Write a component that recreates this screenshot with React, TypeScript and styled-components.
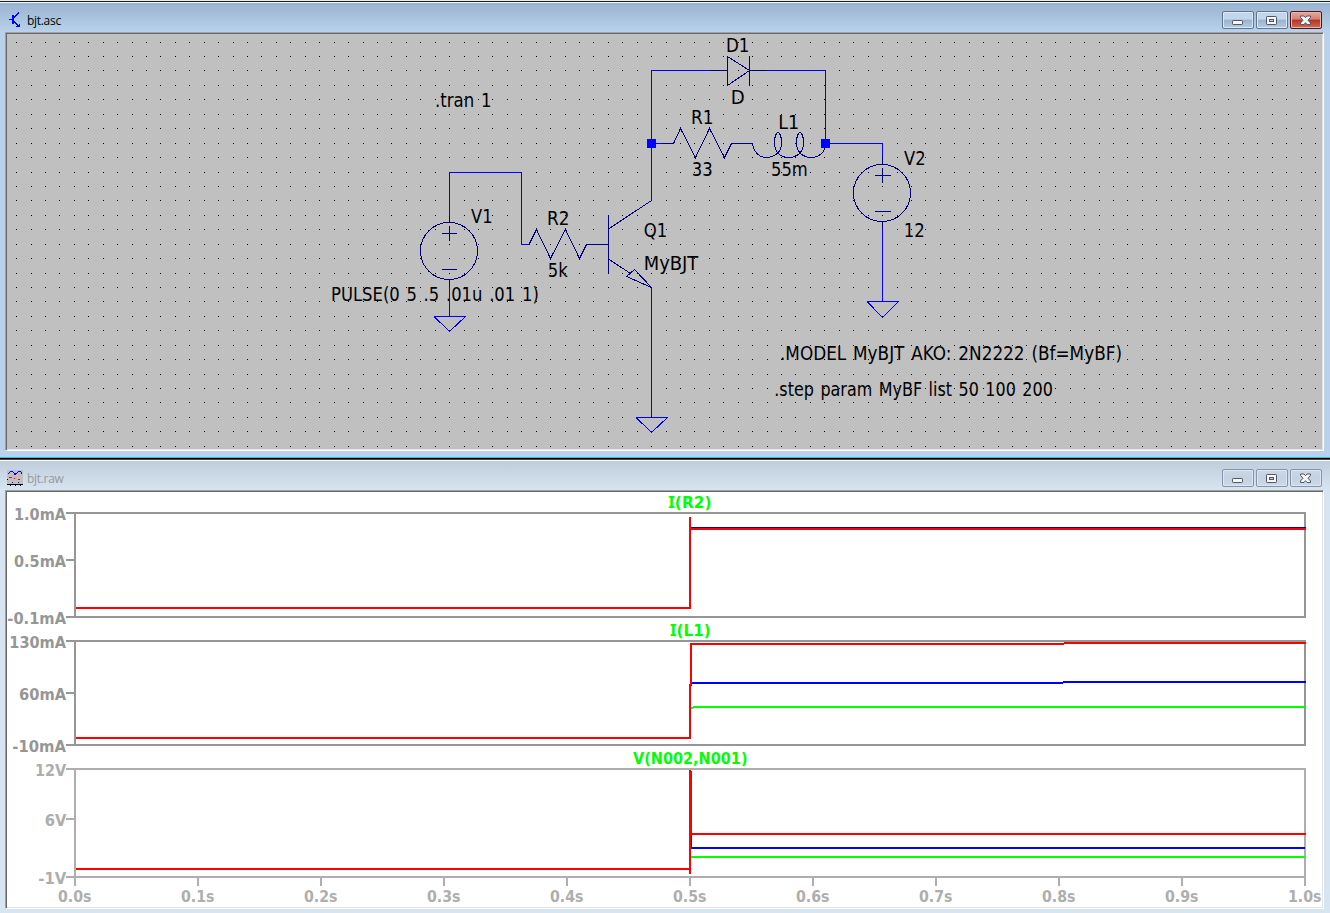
import React from "react";
import styled, { createGlobalStyle } from "styled-components";

const GlobalStyle = createGlobalStyle`
  body { margin: 0; background: #d7e4f2; overflow: hidden; }
`;

const Desktop = styled.main`
  width: 1330px;
  height: 913px;
  display: flex;
  flex-direction: column;
  overflow: hidden;
`;

const Win = styled.section<{ $active?: boolean }>`
  flex: none;
  box-sizing: border-box;
  height: ${(p) => (p.$active ? 459 : 454)}px;
  display: flex;
  flex-direction: column;
  background: ${(p) => (p.$active ? "#b9d1ea" : "#d7e4f2")};
  border-bottom: ${(p) => (p.$active ? "1px solid #000" : "none")};
  box-shadow: ${(p) => (p.$active ? "inset 0 -1px 0 #2fc4dc" : "none")};
`;

const TopEdge = styled.div<{ $active?: boolean }>`
  flex: none;
  height: ${(p) => (p.$active ? 3 : 2)}px;
  background: ${(p) =>
    p.$active
      ? "linear-gradient(#e9eee6 0 1px, #1c1f24 1px 2px, #f2f7fb 2px 3px)"
      : "linear-gradient(#47443f 0 1px, #fbfcfd 1px 2px)"};
`;

const TitleBar = styled.header<{ $active?: boolean }>`
  flex: none;
  height: 29px;
  box-sizing: border-box;
  padding: 8px 8px 0 7px;
  display: flex;
  align-items: flex-start;
  background: ${(p) =>
    p.$active ? "linear-gradient(#99b4d1, #b9d1ea)" : "linear-gradient(#bfcddb, #d7e4f2)"};
`;

const Title = styled.h1<{ $active?: boolean }>`
  flex: 1;
  margin: 1px 0 0 4px;
  font: 400 12px/18px "Open Sans", "Noto Sans", sans-serif;
  letter-spacing: -0.3px;
  color: ${(p) => (p.$active ? "#000" : "#999")};
`;

const Controls = styled.div`
  display: flex;
  gap: 2px;
`;

const looks = {
  active: ["#62748f", "linear-gradient(#c3d6ea 0 45%, #98b2cf 50%, #b4cce5)", "#dae7f4"],
  idle: ["#8593ac", "linear-gradient(#cbd8e6, #c3d1e0 50%, #ccd9e8)", "#dbe6f1"],
  close: ["#4d1420", "linear-gradient(#e4a79c 0, #d38275 45%, #b5331f 50%, #cf6d55)", "#eab6a9"],
};

const ControlButton = styled.button<{ $look: keyof typeof looks }>`
  width: 32px;
  height: 18px;
  padding: 0;
  box-sizing: border-box;
  display: flex;
  align-items: center;
  justify-content: center;
  border: 1px solid ${(p) => looks[p.$look][0]};
  border-radius: 2px;
  background: ${(p) => looks[p.$look][1]};
  box-shadow: inset 0 0 0 1px ${(p) => looks[p.$look][2]};
`;

const Client = styled.div<{ $fill: string }>`
  flex: none;
  width: 1315px;
  height: 415px;
  margin-left: 5px;
  border: 1px solid;
  border-color: #a0a0a0 #fff #fff #a0a0a0;
  padding: 1px;
  background:
    linear-gradient(#696969, #696969) 0 0 / 100% 1px no-repeat,
    linear-gradient(#696969, #696969) 0 0 / 1px 100% no-repeat,
    linear-gradient(#e3e3e3, #e3e3e3) 0 100% / 100% 1px no-repeat,
    linear-gradient(#e3e3e3, #e3e3e3) 100% 0 / 1px 100% no-repeat,
    ${(p) => p.$fill};
`;

const Canvas = styled.svg`
  display: block;
  width: 1315px;
  height: 415px;
`;

const Wire = styled.path`
  fill: none;
  stroke: #0000ff;
  stroke-width: 1;
  shape-rendering: crispEdges;
`;

const Part = styled(Wire)`
  stroke: #000080;
`;

const Label = styled.text`
  font: 400 18.6px "DejaVu Sans Condensed", "DejaVu Sans", sans-serif;
  word-spacing: 1.5px;
  fill: #000;
`;

const AxisText = styled.text<{ $tone: string }>`
  font: 700 16.3px "DejaVu Sans Condensed", "DejaVu Sans", sans-serif;
  fill: ${(p) => p.$tone};
`;

const SerifI = styled.tspan`
  font-family: "Noto Sans", sans-serif;
`;

const Axis = styled.path`
  fill: none;
  stroke-width: 2;
  shape-rendering: crispEdges;
`;

const Trace = styled(Axis)``;

function Buttons({ active }: { active?: boolean }) {
  const look = active ? "active" : "idle";
  return (
    <Controls>
      <ControlButton $look={look} aria-label="Minimize">
        <svg width="12" height="12" viewBox="0 0 12 12">
          <rect x=".5" y="6.5" width="10" height="4" rx=".7" fill="#f6f6f6" stroke="#535666" />
        </svg>
      </ControlButton>
      <ControlButton $look={look} aria-label="Restore">
        <svg width="12" height="12" viewBox="0 0 12 12">
          <rect x=".5" y="2.5" width="10" height="8" rx=".7" fill="#f6f6f6" stroke="#535666" />
          <rect x="3.5" y="5.5" width="4" height="2" fill="#b9cadd" stroke="#535666" />
        </svg>
      </ControlButton>
      <ControlButton $look={active ? "close" : "idle"} aria-label="Close">
        <svg width="12" height="12" viewBox="0 0 12 12">
          <path
            d="M.5 2H4L5.5 3.7 7 2H10.5V3.4L8 6.2 10.5 9V10.5H7L5.5 8.7 4 10.5H.5V9L3 6.2.5 3.4Z"
            fill="#f6f6f6"
            stroke="#535666"
          />
        </svg>
      </ControlButton>
    </Controls>
  );
}

const TransistorIcon = () => (
  <svg width="16" height="18" viewBox="7 11 16 18" shapeRendering="crispEdges">
    <path d="M9 19.5H12M14 17.5L19 12.5M14 21.5L18 25.5" stroke="#00f" fill="none" />
    <path d="M12 15H14V24H12ZM19 24H20V27H16V26H17V25H19Z" fill="#00f" />
  </svg>
);

const WaveIcon = () => (
  <svg width="16" height="18" viewBox="7 469 16 18" shapeRendering="crispEdges">
    <rect x="7" y="470" width="16" height="14" fill="#c0c0c0" />
    <path d="M7.5 474.5L10.5 471.5H12.5L15 474.5L18.5 471.5H20.5L22.5 474.5" fill="none" stroke="#00f" />
    <path d="M9 477H12V478H9ZM14 478H15V479H14ZM18 479H20V480H18Z" fill="#f00" />
    <path d="M12 482H13V483H12ZM18 482H19V483H18Z" fill="#00f" />
    <path d="M7 479H8V480H7ZM7 484H23V485H7ZM10 485H11V486H10ZM15 485H16V486H15ZM20 485H21V486H20Z" fill="#000" />
  </svg>
);

const dotRows = Array.from({ length: 29 }, (_, k) => Math.floor(42.135 + 14.43 * k));
const dotCols = Array.from({ length: 91 }, (_, k) => Math.floor(16.65 + 14.432 * k));
const dots = dotRows.map((y) => dotCols.map((x) => `M${x} ${y}h1v1h-1z`).join("")).join("");

// text, left edge, baseline, advance width
const labels: [string, number, number, number][] = [
  [".tran 1", 435, 107, 56.5],
  ["D1", 726, 52, 23.5],
  ["D", 730.8, 104, 14],
  ["R1", 691, 124, 22.5],
  ["33", 691.8, 176, 21],
  ["L1", 778.2, 129, 21],
  ["55m", 771, 176, 36.8],
  ["V2", 904, 165, 21.5],
  ["12", 903.8, 237, 21],
  ["V1", 471, 223, 21.5],
  ["R2", 547, 225, 22.5],
  ["5k", 547.8, 277, 20],
  ["Q1", 643.8, 237, 23.5],
  ["MyBJT", 643.8, 270, 54.5],
  ["PULSE(0 5 .5 .01u .01 1)", 331, 301, 207.8],
  [".MODEL MyBJT AKO: 2N2222 (Bf=MyBF)", 780, 360, 342],
  [".step param MyBF list 50 100 200", 774.3, 396, 278.5],
];

function Schematic() {
  return (
    <Canvas viewBox="7 34 1315 415">
      <path d={dots} fill="#000" shapeRendering="crispEdges" />
      <Wire d="M651.5 200V70.5H710M767 70.5H825.5V143.5H882.5V157M656 143.5H662M882.5 229V301.5M867 301.5H898.5L882.5 317.5L867 301.5" />
      <Wire d="M449.5 216V172.5H521.5V244.5H529M449.5 287V316.5M434 316.5H465.5L449.5 331.5L434 316.5M651.5 288V417.5M636 417.5H667.5L651.5 432.5L636 417.5" />
      <Part d="M710 70.5H727.5M727.5 56V86M727.5 56.5L749.5 70.5L727.5 85.5M749.5 56V86M749.5 70.5H767" />
      <Part d="M662 143.5H673.5L680.5 128.5L695.5 157.5L709.5 128.5L724.5 157.5L731.5 143.5H752.5" />
      <Part d="M752.5 143.5C754 152 759 157.5 766 157.5C775 157.5 781.5 152 781.5 143C781.5 137 780 132.5 778 132.5C776 132.5 774.5 137 774.5 143C774.5 152 780 157.5 788.5 157.5C797 157.5 803.5 152 803.5 143C803.5 137 802 132.5 800 132.5C798 132.5 796.5 137 796.5 143C796.5 152 803 157.5 811.5 157.5C819 157.5 825.5 152 825.5 143.5" />
      <path d="M647 139h9v9h-9zM821 139h9v9h-9z" fill="#00f" />
      <Part d="M882.5 157V164.5M882.5 222V229M875 175.5H891M882.5 168V183M875 211.5H891M853.5 193a28.5 28.5 0 1 0 57 0a28.5 28.5 0 1 0 -57 0" />
      <Part d="M449.5 216V222.5M449.5 280V287M442 233.5H457M449.5 226V241M442 269.5H457M420.5 251a28.5 28.5 0 1 0 57 0a28.5 28.5 0 1 0 -57 0" />
      <Part d="M529 244.5L536.5 229.5L550.5 258.5L565.5 229.5L579.5 258.5L586.5 244.5H608.5M608.5 215V274M608.5 229L651.5 200.5M608.5 259L630.5 273.5M651.5 287.5L634.5 269.5L626.5 276.5Z" />
      {labels.map(([text, x, y, w]) => (
        <Label key={`${x}-${y}`} x={x} y={y} textLength={w} lengthAdjust="spacingAndGlyphs">
          {text}
        </Label>
      ))}
    </Canvas>
  );
}

const GREY = "#969696";
const LIGHT = "#aeaeae";

// text, left edge, baseline, advance width, colour
const axisLabels: [string, number, number, number, string][] = [
  ["1.0mA", 14, 520, 52, GREY],
  ["0.5mA", 14, 567, 52, GREY],
  ["-0.1mA", 7.3, 624, 58.7, GREY],
  ["130mA", 9.3, 648, 56.7, GREY],
  ["60mA", 19, 700, 47, GREY],
  ["-10mA", 12.3, 752, 53.7, GREY],
  ["12V", 35, 776, 31.3, LIGHT],
  ["6V", 44.7, 826, 21.6, LIGHT],
  ["-1V", 38.3, 884, 28, LIGHT],
];

function Waveforms() {
  return (
    <Canvas viewBox="7 492 1315 415">
      <Axis stroke={GREY} d="M66 513H1306M66 560H74M66 617H1306M75 512V618M1305 512V618" />
      <Axis stroke={GREY} d="M66 641H1306M66 693H74M66 745H1306M75 640V746M1305 640V746" />
      <Axis stroke={LIGHT} d="M66 769H1306M66 819H74M66 877H1306M75 768V878M1305 768V878" />
      {Array.from({ length: 11 }, (_, i) => (
        <React.Fragment key={i}>
          <Axis stroke={LIGHT} d={`M${75 + 123 * i} 878V886`} />
          <AxisText $tone={LIGHT} x={58 + 123 * i} y={902} textLength={33.5} lengthAdjust="spacingAndGlyphs">
            {(i / 10).toFixed(1) + "s"}
          </AxisText>
        </React.Fragment>
      ))}
      {axisLabels.map(([text, x, y, w, tone]) => (
        <AxisText key={text} $tone={tone} x={x} y={y} textLength={w} lengthAdjust="spacingAndGlyphs">
          {text}
        </AxisText>
      ))}

      <AxisText $tone="#00ff00" x={668.2} y={508} textLength={43.3} lengthAdjust="spacingAndGlyphs">
        <SerifI>I</SerifI>(R2)
      </AxisText>
      <AxisText $tone="#00ff00" x={670} y={636} textLength={40.7} lengthAdjust="spacingAndGlyphs">
        <SerifI>I</SerifI>(L1)
      </AxisText>
      <AxisText $tone="#00ff00" x={633} y={764} textLength={114.5} lengthAdjust="spacingAndGlyphs">
        V(N002,N001)
      </AxisText>

      <Trace stroke="#0000c8" d="M691 528H1306" />
      <Trace stroke="#f00" d="M76 608H690M690 517V609M691 529H1306" />

      <Trace stroke="#0f0" d="M691 708H693M693 707H1305" />
      <Trace stroke="#00f" d="M691 686V683H1063M1063 682H1306" />
      <Trace stroke="#f00" d="M76 738H690M690 739V684M691 685V644H1064M1064 643H1306" />

      <Trace stroke="#0f0" d="M691 857H1305" />
      <Trace stroke="#00f" d="M691 835V848H1305" />
      <Trace stroke="#f00" d="M76 869H690M690 770V874M691 771V834H1306" />
    </Canvas>
  );
}

export default function App() {
  return (
    <Desktop>
      <GlobalStyle />
      <Win $active>
        <TopEdge $active />
        <TitleBar $active>
          <TransistorIcon />
          <Title $active>bjt.asc</Title>
          <Buttons active />
        </TitleBar>
        <Client $fill="#c0c0c0">
          <Schematic />
        </Client>
      </Win>
      <Win>
        <TopEdge />
        <TitleBar>
          <WaveIcon />
          <Title>bjt.raw</Title>
          <Buttons />
        </TitleBar>
        <Client $fill="#fff">
          <Waveforms />
        </Client>
      </Win>
    </Desktop>
  );
}
